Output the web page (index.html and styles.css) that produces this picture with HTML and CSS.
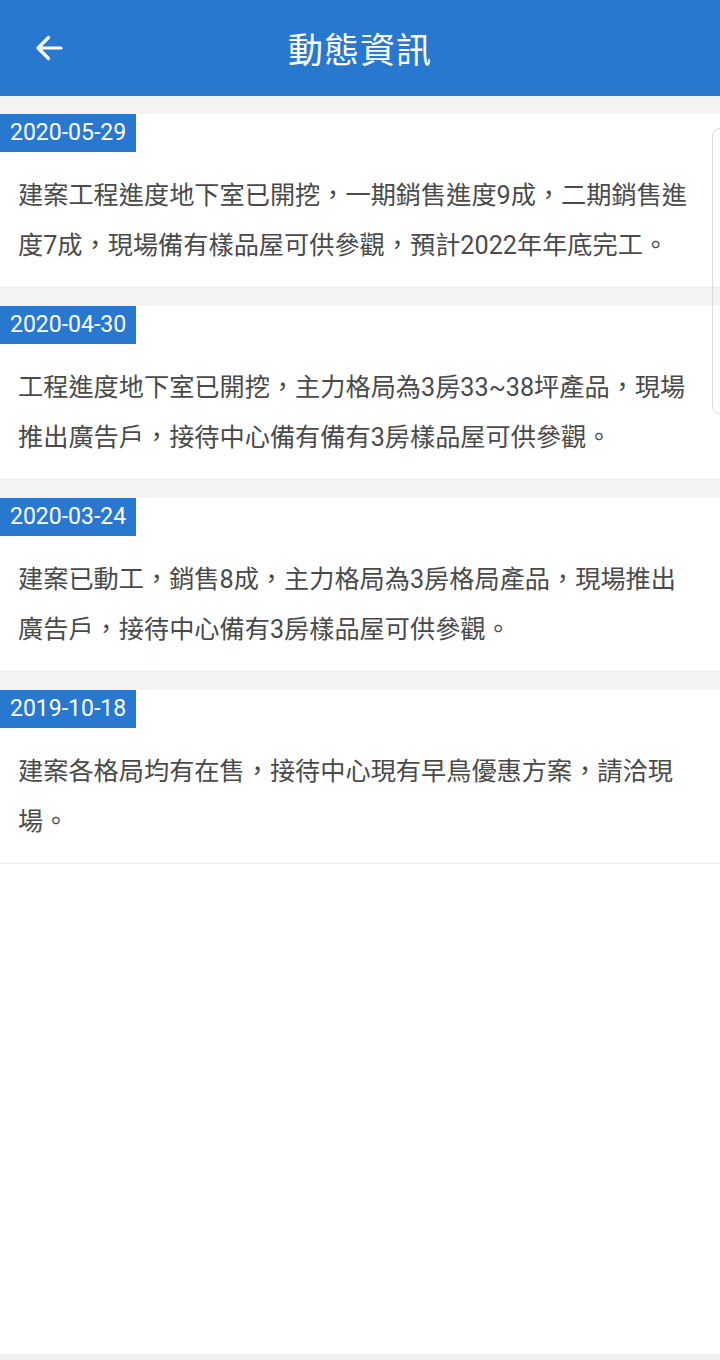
FILE: index.html
```html
<!DOCTYPE html>
<html lang="zh-Hant">
<head>
  <meta charset="UTF-8" />
  <title>動態資訊</title>
  <meta name="viewport" content="width=device-width, initial-scale=1.0" />
  <link rel="stylesheet" href="styles.css">
</head>
<body>

  <div class="page">
    <header class="top-bar">
      <a class="back-btn" href="#">
        <svg width="30" height="30" viewBox="0 0 30 30">
          <path d="M27 15H4M14.5 4.5L4 15l10.5 10.5" fill="none" stroke="#fff" stroke-width="3.2" stroke-linecap="round" stroke-linejoin="round" />
        </svg>
      </a>
      <h1>動態資訊</h1>
    </header>

    <main class="news-area">
      <div class="news-list">
        <div class="news-item">
          <span class="news-date">2020-05-29</span>
          <p class="news-text">建案工程進度地下室已開挖，一期銷售進度9成，二期銷售進度7成，現場備有樣品屋可供參觀，預計2022年年底完工。</p>
        </div>
        <div class="news-item">
          <span class="news-date">2020-04-30</span>
          <p class="news-text">工程進度地下室已開挖，主力格局為3房33~38坪產品，現場推出廣告戶，接待中心備有備有3房樣品屋可供參觀。</p>
        </div>
        <div class="news-item">
          <span class="news-date">2020-03-24</span>
          <p class="news-text">建案已動工，銷售8成，主力格局為3房格局產品，現場推出廣告戶，接待中心備有3房樣品屋可供參觀。</p>
        </div>
        <div class="news-item">
          <span class="news-date">2019-10-18</span>
          <p class="news-text">建案各格局均有在售，接待中心現有早鳥優惠方案，請洽現場。</p>
        </div>
      </div>
      <div class="scroll-hint"></div>
    </main>

    <div class="bottom-strip"></div>
  </div>

</body>
</html>
```

FILE: styles.css
```css
/* Basic reset */
* {
  margin: 0;
  padding: 0;
  box-sizing: border-box;
}

body {
  font-family: Roboto, "Noto Sans CJK TC", sans-serif;
  background: #fff;
  color: #4a4a4a;
}

.page {
  min-height: 100vh;
  display: flex;
  flex-direction: column;
}

.top-bar {
  height: 96px;
  background-color: #2878d0;
  display: flex;
  align-items: center;
  justify-content: center;
  position: relative;
}

.back-btn {
  position: absolute;
  left: 34px;
  top: 33px;
  display: flex;
}

.top-bar h1 {
  font-family: "Noto Sans CJK TC", sans-serif;
  font-size: 35px;
  font-weight: 400;
  color: #fff;
  letter-spacing: 1px;
  margin-top: -2px;
}

.news-area {
  flex: 1;
  position: relative;
}

.news-list {
  background: #f3f3f3;
  padding-top: 18px;
  display: flex;
  flex-direction: column;
  gap: 18px;
}

.news-item {
  background: #fff;
  height: 174px;
  border-bottom: 1px solid #ececec;
}

.news-date {
  display: inline-block;
  height: 38px;
  line-height: 38px;
  padding: 0 10px;
  background-color: #2878d0;
  color: #fff;
  font-size: 23px;
}

.news-text {
  margin-top: 19px;
  padding: 0 26px 0 18px;
  font-size: 25.2px;
  line-height: 50px;
}

.scroll-hint {
  position: absolute;
  right: -10px;
  top: 32px;
  width: 18px;
  height: 286px;
  border: 1px solid #dcdcdc;
  border-radius: 8px;
}

.bottom-strip {
  height: 6px;
  background: #f0f0f0;
}
```
